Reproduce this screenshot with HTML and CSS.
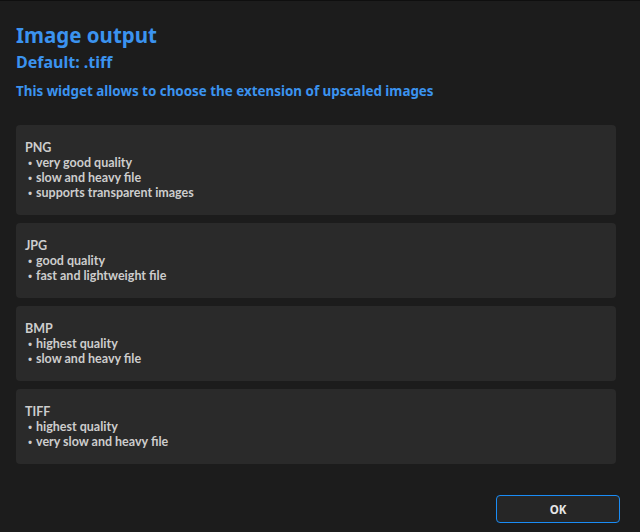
FILE: index.html
```html
<!DOCTYPE html>
<html>
<head>
<meta charset="utf-8">
<link rel="stylesheet" href="styles.css">
</head>
<body>
<div class="dialog">
  <header class="head">
    <h1 class="title">Image output</h1>
    <h2 class="subtitle">Default: .tiff</h2>
    <p class="desc">This widget allows to choose the extension of upscaled images</p>
  </header>
  <div class="cards">
    <div class="card">
      <div class="name">PNG</div>
      <div class="item"><span class="dot">•</span>very good quality</div>
      <div class="item"><span class="dot">•</span>slow and heavy file</div>
      <div class="item"><span class="dot">•</span>supports transparent images</div>
    </div>
    <div class="card">
      <div class="name">JPG</div>
      <div class="item"><span class="dot">•</span>good quality</div>
      <div class="item"><span class="dot">•</span>fast and lightweight file</div>
    </div>
    <div class="card">
      <div class="name">BMP</div>
      <div class="item"><span class="dot">•</span>highest quality</div>
      <div class="item"><span class="dot">•</span>slow and heavy file</div>
    </div>
    <div class="card">
      <div class="name">TIFF</div>
      <div class="item"><span class="dot">•</span>highest quality</div>
      <div class="item"><span class="dot">•</span>very slow and heavy file</div>
    </div>
  </div>
  <div class="footer">
    <button class="ok">OK</button>
  </div>
</div>
</body>
</html>
```
FILE: styles.css
```css
html, body {
  margin: 0;
  padding: 0;
  background: #1c1c1c;
  height: 100%;
}
body {
  font-family: "Noto Sans", "Open Sans", sans-serif;
  border-top: 1px solid #0f0f0f;
  box-sizing: border-box;
}
.dialog {
  padding: 0 24px 0 16px;
  display: flex;
  flex-direction: column;
}
.head {
  padding-top: 20px;
}
.title {
  margin: 0;
  font-size: 20.5px;
  line-height: 28px;
  font-weight: 700;
  color: #3b93ef;
}
.subtitle {
  margin: 0;
  font-size: 16px;
  line-height: 26px;
  font-weight: 700;
  color: #3b93ef;
}
.desc {
  margin: 6px 0 0;
  font-size: 13.4px;
  line-height: 20px;
  font-weight: 700;
  color: #3b93ef;
}
.cards {
  margin-top: 24px;
  display: flex;
  flex-direction: column;
  gap: 8px;
  width: 600px;
}
.card {
  background: #2a2a2a;
  border-radius: 4px;
  padding: 15px 9px 15px 9px;
  font-family: "Lato", "Noto Sans", sans-serif;
  font-size: 12.5px;
  line-height: 15px;
  font-weight: 700;
  color: #cdcdcd;
}
.item {
  display: flex;
  padding-left: 3px;
}
.dot {
  font-family: "Noto Sans", sans-serif;
  font-size: 11px;
  width: 8px;
}
.footer {
  display: flex;
  justify-content: flex-end;
  margin-top: 31px;
  width: 604px;
}
.ok {
  width: 124px;
  height: 28px;
  background: #262626;
  border: 1px solid #1a8cf5;
  border-radius: 4px;
  color: #e6e6e6;
  font-family: "Noto Sans", sans-serif;
  font-weight: 700;
  font-size: 11.5px;
  padding: 0;
}
```
